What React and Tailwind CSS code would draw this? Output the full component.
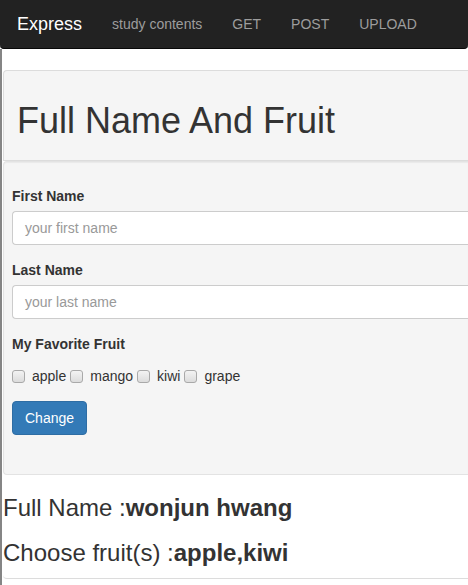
import React from "react";

function Box() {
  return (
    <span className="inline-block w-[13px] h-[13px] rounded-[3px] border border-[#a9a9a9] bg-gradient-to-b from-[#f3f3f3] to-[#dcdcdc]" />
  );
}

export default function App() {
  const fruits = ["apple", "mango", "kiwi", "grape"];
  return (
    <div className="w-[468px] h-[585px] overflow-hidden bg-white text-[#333] text-[14px]" style={{ fontFamily: '"Liberation Sans", Arial, sans-serif' }}>
      <nav className="h-[49px] bg-[#222] border-b border-[#080808] rounded-b-[4px] flex items-center">
        <span className="pl-[17px] pr-[15px] text-[18px] text-white">Express</span>
        <span className="px-[15px] text-[#9d9d9d]">study contents</span>
        <span className="px-[15px] text-[#9d9d9d]">GET</span>
        <span className="px-[15px] text-[#9d9d9d]">POST</span>
        <span className="px-[15px] text-[#9d9d9d]">UPLOAD</span>
      </nav>
      <div className="border-l-2 border-[#858585] pl-px h-[536px] pt-[21px]">
        <div className="bg-[#f5f5f5] border-t border-b border-l border-[#dcdcdc] rounded-tl-[4px] h-[91px] flex items-center pl-[13px]">
          <h1 className="text-[36px] leading-[40px] pt-[10px]">Full Name And Fruit</h1>
        </div>
        <div className="bg-[#f5f5f5] border border-r-0 border-[#e3e3e3] rounded-l-[4px] h-[314px] pl-[8px] pt-[24px] shadow-[inset_0_1px_1px_rgba(0,0,0,0.05)]">
          <div className="font-bold leading-[20px] mb-[5px]">First Name</div>
          <div className="h-[34px] border border-r-0 border-[#ccc] rounded-l-[4px] bg-white flex items-center pl-[12px] text-[#999] mb-[15px]">your first name</div>
          <div className="font-bold leading-[20px] mb-[5px]">Last Name</div>
          <div className="h-[34px] border border-r-0 border-[#ccc] rounded-l-[4px] bg-white flex items-center pl-[12px] text-[#999] mb-[15px]">your last name</div>
          <div className="font-bold leading-[20px] mb-[12px]">My Favorite Fruit</div>
          <div className="flex items-center h-[20px] mb-[15px]">
            {fruits.map((f) => (
              <span key={f} className="flex items-center">
                <Box />
                <span className="ml-[7px] mr-[4px]">{f}</span>
              </span>
            ))}
          </div>
          <button className="h-[34px] px-[12px] bg-[#337ab7] border border-[#2e6da4] rounded-[4px] text-white">Change</button>
        </div>
        <div className="border-b border-[#dcdcdc] rounded-bl-[4px] h-[104px] pt-[20px]">
          <div className="text-[24px] leading-[26px]">Full Name :<b>wonjun hwang</b></div>
          <div className="text-[24px] leading-[26px] mt-[19px]">Choose fruit(s) :<b>apple,kiwi</b></div>
        </div>
      </div>
    </div>
  );
}
